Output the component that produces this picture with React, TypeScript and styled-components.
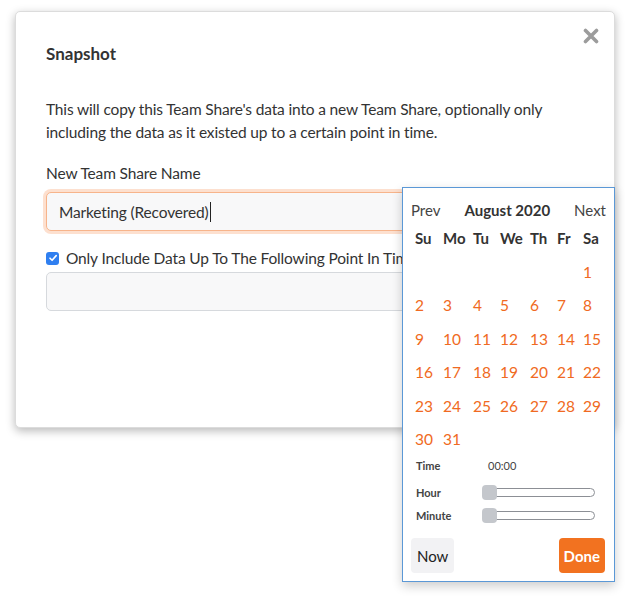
import React from "react";
import styled, { createGlobalStyle } from "styled-components";

const FONT = `"Lato", "Noto Sans", sans-serif`;

const Global = createGlobalStyle`
  html, body { margin: 0; padding: 0; background: #fff; }
  body { font-family: ${FONT}; color: #333; }
  * { box-sizing: border-box; }
`;

const Page = styled.div`
  position: relative;
  width: 625px;
  height: 597px;
  padding: 11px 0 0 15px;
`;

const Modal = styled.div`
  position: relative;
  width: 600px;
  height: 417px;
  background: #fff;
  border: 1px solid #dcdcdc;
  border-radius: 5px;
  box-shadow: 0 3px 10px rgba(0, 0, 0, 0.28);
  padding: 30px 30px;
`;

const Close = styled.button`
  position: absolute;
  top: 16px;
  right: 15px;
  width: 16px;
  height: 16px;
  padding: 0;
  border: 0;
  background: none;
  display: flex;
`;

const Title = styled.h2`
  margin: 0;
  font-size: 17px;
  line-height: 24px;
  font-weight: 700;
  color: #333;
`;

const Para = styled.p`
  margin: 32px 0 0;
  font-size: 15.5px;
  letter-spacing: -0.15px;
  line-height: 23px;
  color: #333;
`;

const Label = styled.div`
  margin-top: 17px;
  font-size: 15.5px;
  letter-spacing: -0.15px;
  line-height: 24px;
  color: #333;
`;

const Input = styled.div<{ $focused?: boolean }>`
  margin-top: ${(p) => (p.$focused ? "7px" : "1px")};
  height: 39px;
  flex: none;
  border-radius: 5px;
  border: 1px solid ${(p) => (p.$focused ? "#f7b48b" : "#d6d9dd")};
  box-shadow: ${(p) => (p.$focused ? "0 0 0 3px #fde0cf" : "none")};
  background: #f8f8f9;
  padding: 0 12px;
  display: flex;
  align-items: center;
  font-size: 15.5px;
  letter-spacing: -0.15px;
  color: #333;
`;

const Caret = styled.span`
  display: inline-block;
  width: 1px;
  height: 20px;
  background: #222;
  margin-left: 1px;
`;

const CheckRow = styled.div`
  margin-top: 14px;
  height: 26px;
  display: flex;
  align-items: center;
  gap: 7px;
  font-size: 15.5px;
  letter-spacing: -0.15px;
  color: #333;
  white-space: nowrap;
`;

const CheckBox = styled.span`
  width: 13px;
  height: 13px;
  border-radius: 3px;
  background: #2f7ff0;
  display: flex;
  align-items: center;
  justify-content: center;
`;

const Picker = styled.div`
  position: absolute;
  left: 402px;
  top: 187px;
  width: 213px;
  height: 395px;
  background: #fff;
  border: 1px solid #5b98d6;
  box-shadow: 0 4px 10px rgba(0, 0, 0, 0.2);
  padding: 4px 8px 8px;
  font-family: ${FONT};
  display: flex;
  flex-direction: column;
`;

const PickerHeader = styled.div`
  height: 36px;
  display: flex;
  align-items: center;
  justify-content: space-between;
  font-size: 15px;
  color: #444;
`;

const Month = styled.span`
  font-weight: 700;
  color: #333;
`;

const Grid = styled.div`
  display: grid;
  grid-template-columns: 28px 30px 27px 30px 27px 26px 1fr;
  padding-left: 4px;
`;

const DayName = styled.div`
  height: 27px;
  font-size: 15px;
  font-weight: 700;
  color: #333;
  line-height: 20px;
`;

const Day = styled.div`
  height: 33.5px;
  display: flex;
  align-items: center;
  font-size: 15.5px;
  color: #f06a22;
`;

const TimeRow = styled.div<{ $h: number }>`
  display: flex;
  align-items: center;
  height: ${(p) => p.$h}px;
  padding-left: 5px;
  font-size: 11px;
  color: #444;
`;

const TimeLabel = styled.span<{ $w: number }>`
  width: ${(p) => p.$w}px;
  font-weight: 700;
  flex: none;
`;

const Slider = styled.div`
  position: relative;
  width: 111px;
  height: 9px;
  border: 1px solid #8c8f95;
  border-radius: 5px;
  background: #fff;
`;

const Handle = styled.span`
  position: absolute;
  left: -3px;
  top: -4px;
  width: 15px;
  height: 15px;
  border-radius: 4px;
  background: #c4c7cc;
`;

const Buttons = styled.div`
  margin-top: auto;
  display: flex;
  justify-content: space-between;
  align-items: center;
`;

const Btn = styled.button<{ $primary?: boolean }>`
  height: 35px;
  padding: 0 ${(p) => (p.$primary ? "5px" : "6px")};
  border: 0;
  border-radius: 4px;
  font-family: ${FONT};
  font-size: 15px;
  font-weight: ${(p) => (p.$primary ? 700 : 400)};
  background: ${(p) => (p.$primary ? "#f27220" : "#f2f2f4")};
  color: ${(p) => (p.$primary ? "#fff" : "#222")};
  margin-right: ${(p) => (p.$primary ? "1px" : "0")};
`;

const names = ["Su", "Mo", "Tu", "We", "Th", "Fr", "Sa"];
const days: (number | null)[] = [null, null, null, null, null, null];
for (let i = 1; i <= 31; i++) days.push(i);

export default function App() {
  return (
    <>
      <Global />
      <Page>
        <Modal>
          <Close aria-label="Close">
            <svg width="16" height="16" viewBox="0 0 16 16">
              <path d="M2.5 2.5 L13.5 13.5 M13.5 2.5 L2.5 13.5" stroke="#9c9c9c" strokeWidth="3.6" strokeLinecap="round" />
            </svg>
          </Close>
          <Title>Snapshot</Title>
          <Para>
            This will copy this Team Share's data into a new Team Share, optionally only including the data as it
            existed up to a certain point in time.
          </Para>
          <Label>New Team Share Name</Label>
          <Input $focused>
            Marketing (Recovered)
            <Caret />
          </Input>
          <CheckRow>
            <CheckBox>
              <svg width="10" height="10" viewBox="0 0 10 10">
                <path d="M2 5.2 L4.1 7.3 L8.2 2.6" stroke="#fff" strokeWidth="1.6" fill="none" strokeLinecap="round" strokeLinejoin="round" />
              </svg>
            </CheckBox>
            Only Include Data Up To The Following Point In Time
          </CheckRow>
          <Input />
        </Modal>

        <Picker>
          <PickerHeader>
            <span>Prev</span>
            <Month>August 2020</Month>
            <span>Next</span>
          </PickerHeader>
          <Grid>
            {names.map((n) => (
              <DayName key={n}>{n}</DayName>
            ))}
            {days.map((d, i) => (
              <Day key={i}>{d ?? ""}</Day>
            ))}
          </Grid>
          <TimeRow $h={18}>
            <TimeLabel $w={72}>Time</TimeLabel>
            <span>00:00</span>
          </TimeRow>
          <TimeRow $h={7} />
          <TimeRow $h={23}>
            <TimeLabel $w={68}>Hour</TimeLabel>
            <Slider>
              <Handle />
            </Slider>
          </TimeRow>
          <TimeRow $h={23}>
            <TimeLabel $w={68}>Minute</TimeLabel>
            <Slider>
              <Handle />
            </Slider>
          </TimeRow>
          <Buttons>
            <Btn>Now</Btn>
            <Btn $primary>Done</Btn>
          </Buttons>
        </Picker>
      </Page>
    </>
  );
}
